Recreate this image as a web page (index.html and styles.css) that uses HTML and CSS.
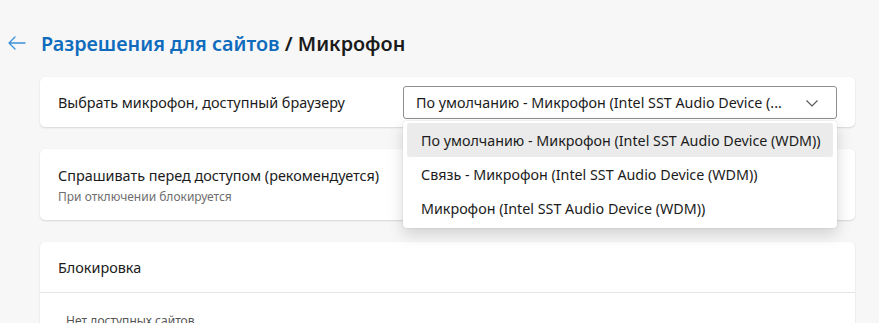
FILE: index.html
```html
<!DOCTYPE html>
<html lang="ru">
<head>
<meta charset="utf-8">
<title>Микрофон</title>
<link rel="stylesheet" href="styles.css">
</head>
<body>
<div class="page">
  <header class="header">
    <button class="back" aria-label="Назад">
      <svg width="18" height="14" viewBox="0 0 18 14"><path d="M7 1 1 7l6 6M1 7h16" fill="none" stroke="#3d8fd9" stroke-width="1.3" stroke-linecap="round" stroke-linejoin="round"/></svg>
    </button>
    <h1 class="title"><span class="crumb">Разрешения для сайтов</span> / Микрофон</h1>
  </header>

  <section class="card card-select">
    <div class="label">Выбрать микрофон, доступный браузеру</div>
    <div class="select-wrap">
      <div class="select">
        <span class="select-text">По умолчанию - Микрофон (Intel SST Audio Device (...</span>
        <svg class="chev" width="12" height="7" viewBox="0 0 12 7"><path d="M0.5 0.5 6 6l5.5-5.5" fill="none" stroke="#555" stroke-width="1.1"/></svg>
      </div>
      <ul class="menu">
        <li class="item active">По умолчанию - Микрофон (Intel SST Audio Device (WDM))</li>
        <li class="item">Связь - Микрофон (Intel SST Audio Device (WDM))</li>
        <li class="item">Микрофон (Intel SST Audio Device (WDM))</li>
      </ul>
    </div>
  </section>

  <section class="card card-ask">
    <div class="label">Спрашивать перед доступом (рекомендуется)</div>
    <div class="sub">При отключении блокируется</div>
  </section>

  <section class="card card-block">
    <div class="block-head">Блокировка</div>
    <div class="block-body">Нет доступных сайтов</div>
  </section>
</div>
</body>
</html>
```
FILE: styles.css
```css
* { box-sizing: border-box; }
html, body { margin: 0; padding: 0; }
body {
  background: #f7f7f7;
  font-family: "Noto Sans", "Open Sans", sans-serif;
  color: #1b1b1b;
  overflow: hidden;
}
.page { padding: 0 24px 0 40px; }
.header {
  display: flex;
  align-items: center;
  height: 86px;
  margin-left: -32px;
}
.back {
  border: 0;
  background: none;
  padding: 0;
  width: 18px;
  height: 14px;
  margin-right: 15px;
  display: flex;
}
.title {
  margin: 0;
  font-size: 19.8px;
  font-weight: 600;
  color: #1b1b1b;
}
.crumb { color: #0f6cbd; }
.card {
  background: #fff;
  border-radius: 5px;
  box-shadow: 0 1px 2px rgba(0,0,0,0.13), 0 0 1px rgba(0,0,0,0.06);
  margin-bottom: 22px;
  width: 815px;
}
.card-select {
  height: 50px;
  display: flex;
  align-items: center;
  justify-content: space-between;
  padding: 0 18px;
  margin-top: -9px;
}
.label { font-size: 14.4px; }
.select-wrap { position: relative; }
.select {
  width: 434px;
  height: 33px;
  border: 1px solid #8f8f8f;
  border-radius: 3px;
  display: flex;
  align-items: center;
  justify-content: space-between;
  padding: 0 18px 0 12px;
  font-size: 14.3px;
  margin-top: 1px;
  white-space: nowrap;
}
.chev { margin-top: 1px; }
.menu {
  position: absolute;
  left: 0;
  top: 36px;
  width: 434px;
  margin: 0;
  padding: 2px 4px 3px;
  list-style: none;
  background: #fff;
  border-radius: 4px;
  box-shadow: 0 6px 16px rgba(0,0,0,0.16), 0 0 2px rgba(0,0,0,0.12);
  z-index: 2;
}
.item {
  height: 34px;
  display: flex;
  align-items: center;
  padding-left: 14px;
  font-size: 14.3px;
  border-radius: 3px;
  white-space: nowrap;
}
.item.active { background: #ebebeb; }
.card-ask {
  height: 71px;
  padding: 17px 18px 0;
}
.card-ask .label { line-height: 20px; }
.sub { font-size: 12px; color: #6e6e6e; margin-top: 2px; }
.card-block { height: 120px; }
.block-head {
  height: 51px;
  border-bottom: 1px solid #e5e5e5;
  padding: 0 18px;
  display: flex;
  align-items: center;
  font-size: 14.4px;
  padding-top: 1px;
}
.block-body { padding: 19px 26px; font-size: 12px; color: #555; }
```
